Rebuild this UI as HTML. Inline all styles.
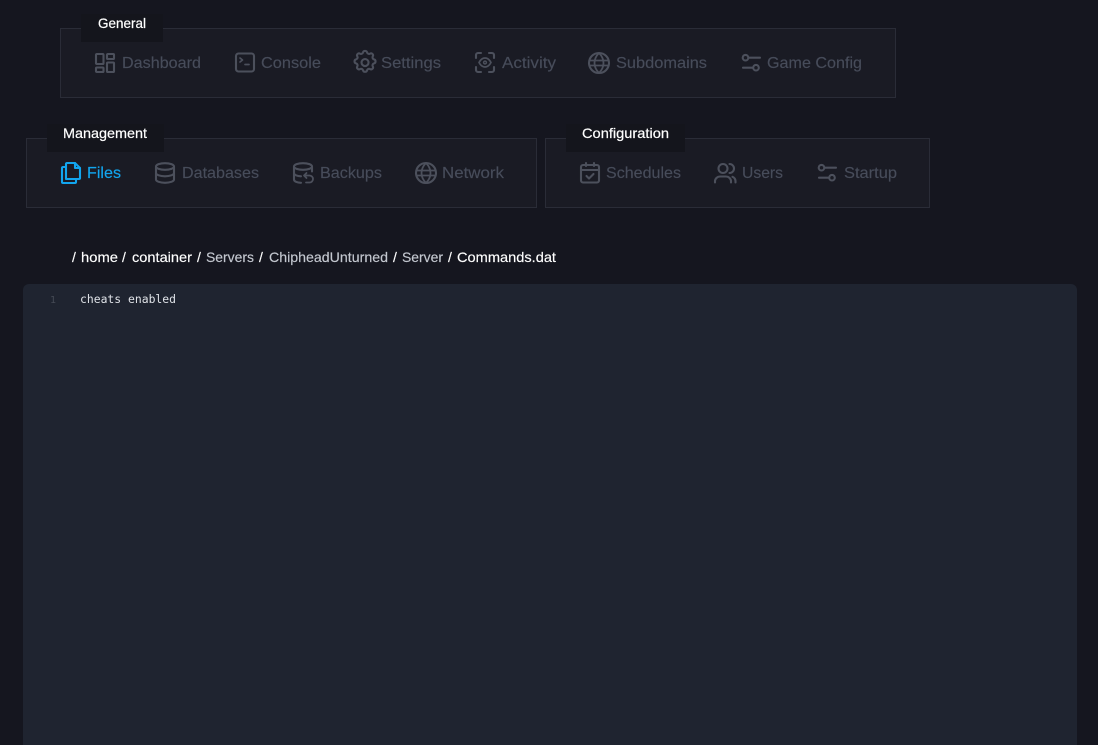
<!DOCTYPE html>
<html>
<head>
<meta charset="utf-8">
<style>
html,body{margin:0;padding:0;width:1098px;height:745px;overflow:hidden;background:#15161f}
svg{position:absolute;left:0;top:0;display:block}
.t{font-family:"Liberation Sans",sans-serif;font-size:16px;fill:#474c5a;stroke:#474c5a;stroke-width:.15}
.l{font-family:"Liberation Sans",sans-serif;font-size:14px;fill:#fff;stroke:#fff;stroke-width:.2}
.b{font-family:"Liberation Sans",sans-serif;font-size:14px;stroke-width:.15}
.i{fill:none;stroke:#4c505c;stroke-width:2.1;stroke-linecap:round;stroke-linejoin:round}
</style>
</head>
<body>
<svg width="1098" height="745" viewBox="0 0 1098 745" xmlns="http://www.w3.org/2000/svg">
  <rect x="60.5" y="28.5" width="835" height="69" fill="#1a1b24" stroke="#2a2c37"/>
  <rect x="26.5" y="138.5" width="510" height="69" fill="#1a1b24" stroke="#2a2c37"/>
  <rect x="545.5" y="138.5" width="384" height="69" fill="#1a1b24" stroke="#2a2c37"/>
  <rect x="81" y="14" width="82" height="28" fill="#14151c"/>
  <rect x="47" y="124" width="117" height="28" fill="#14151c"/>
  <rect x="566" y="124" width="119" height="28" fill="#14151c"/>

  <text class="l" x="98" y="28" textLength="48" lengthAdjust="spacingAndGlyphs">General</text>
  <text class="l" x="63" y="138" textLength="84" lengthAdjust="spacingAndGlyphs">Management</text>
  <text class="l" x="582" y="138" textLength="87" lengthAdjust="spacingAndGlyphs">Configuration</text>

  <text class="t" x="122" y="68" textLength="79" lengthAdjust="spacingAndGlyphs">Dashboard</text>
  <text class="t" x="261" y="68" textLength="60" lengthAdjust="spacingAndGlyphs">Console</text>
  <text class="t" x="381" y="68" textLength="60" lengthAdjust="spacingAndGlyphs">Settings</text>
  <text class="t" x="502" y="68" textLength="54" lengthAdjust="spacingAndGlyphs">Activity</text>
  <text class="t" x="616" y="68" textLength="91" lengthAdjust="spacingAndGlyphs">Subdomains</text>
  <text class="t" x="767" y="68" textLength="95" lengthAdjust="spacingAndGlyphs">Game Config</text>

  <text class="t" style="fill:#12a5ee;stroke:#12a5ee" x="87" y="178" textLength="34" lengthAdjust="spacingAndGlyphs">Files</text>
  <text class="t" x="182" y="178" textLength="77" lengthAdjust="spacingAndGlyphs">Databases</text>
  <text class="t" x="320" y="178" textLength="62" lengthAdjust="spacingAndGlyphs">Backups</text>
  <text class="t" x="442" y="178" textLength="62" lengthAdjust="spacingAndGlyphs">Network</text>
  <text class="t" x="606" y="178" textLength="75" lengthAdjust="spacingAndGlyphs">Schedules</text>
  <text class="t" x="742" y="178" textLength="41" lengthAdjust="spacingAndGlyphs">Users</text>
  <text class="t" x="844" y="178" textLength="53" lengthAdjust="spacingAndGlyphs">Startup</text>

  <!-- Dashboard -->
  <g class="i" stroke-linejoin="miter" transform="translate(95,52)">
    <rect x="1" y="2" width="7.500" height="10" rx=".8"/><rect x="12" y="2" width="7" height="5" rx=".8"/>
    <rect x="1" y="15.500" width="7.500" height="4.500" rx=".8"/><rect x="12" y="10.500" width="7" height="9.500" rx=".8"/>
  </g>
  <!-- Console -->
  <g class="i" transform="translate(235,52)">
    <rect x="1" y="1.500" width="18" height="18" rx="2.500"/>
    <path d="M5 6l2.500 2L5 10M10 12.500h4" stroke-width="1.700"/>
  </g>
  <!-- Settings -->
  <g class="i" style="stroke-width:1.800" transform="translate(351,48.500) scale(1.170)">
    <path d="M10.300 3.300c.4-1.700 3-1.700 3.400 0 .3 1.100 1.500 1.600 2.600 1.100 1.500-.9 3.200.8 2.300 2.300-.6 1 0 2.300 1.100 2.600 1.700.4 1.700 3 0 3.400-1.100.3-1.700 1.500-1.100 2.600.9 1.500-.8 3.200-2.300 2.300-1.100-.6-2.300 0-2.600 1.100-.4 1.700-3 1.700-3.400 0-.3-1.100-1.500-1.700-2.600-1.100-1.500.9-3.200-.8-2.300-2.300.6-1.100 0-2.300-1.100-2.600-1.700-.4-1.700-3 0-3.400 1.100-.3 1.700-1.500 1.100-2.600-.9-1.500.8-3.200 2.300-2.300 1.100.5 2.300 0 2.600-1.100z"/>
    <circle cx="12" cy="12" r="3"/>
  </g>
  <!-- Activity -->
  <g class="i" transform="translate(475,52)">
    <path d="M1 6V3a2 2 0 0 1 2-2h3M14 1h3a2 2 0 0 1 2 2v3M19 15v3a2 2 0 0 1-2 2h-3M6 20H3a2 2 0 0 1-2-2v-3"/>
    <path d="M4 10.500c1.600-3 3.600-4.500 6-4.500s4.400 1.500 6 4.500c-1.600 3-3.600 4.500-6 4.500s-4.400-1.500-6-4.500z" stroke-width="1.700"/>
    <circle cx="10" cy="10.500" r="1.400" stroke-width="1.500"/>
  </g>
  <!-- Subdomains globe -->
  <g class="i" transform="translate(588,52)">
    <circle cx="11" cy="11" r="10"/><path d="M1.500 8.500h19M1.500 13.500h19" stroke-width="1.800"/>
    <path d="M11 1c-6 6-6 14 0 20M11 1c6 6 6 14 0 20" stroke-width="1.800"/>
  </g>
  <!-- Game Config -->
  <g class="i" transform="translate(741,53)">
    <circle cx="4.500" cy="4.700" r="2.800"/><circle cx="15" cy="14.700" r="2.800"/><path d="M8 4.700h11M2 14.700h9.500"/>
  </g>
  <!-- Files -->
  <g class="i" style="stroke:#12a5ee" transform="translate(61,162)">
    <path d="M5 4V2a1 1 0 0 1 1-1h8l5 5v10a1 1 0 0 1-1 1H5z"/>
    <path d="M14 1v5h5"/>
    <path d="M5 5H2a1 1 0 0 0-1 1v14a1 1 0 0 0 1 1h12a1 1 0 0 0 1-1V17"/>
  </g>
  <!-- Databases -->
  <g class="i" transform="translate(155,162)">
    <ellipse cx="10" cy="4.500" rx="9" ry="3.300"/>
    <path d="M1 4.500v13c0 1.800 4 3.300 9 3.300s9-1.500 9-3.300v-13M1 11c0 1.800 4 3.300 9 3.300s9-1.500 9-3.300"/>
  </g>
  <!-- Backups -->
  <g class="i" transform="translate(293,162)">
    <ellipse cx="10" cy="4.500" rx="9" ry="3.300"/>
    <path d="M1 4.500v13c0 1.800 3 3.300 7 3.300M19 4.500v5M1 11c0 1.800 3 3.300 7 3.300"/>
    <path d="M11 13.500h5.500a3.500 3.500 0 0 1 0 7H13M13.500 11l-2.500 2.500 2.500 2.500" stroke-width="1.800"/>
  </g>
  <!-- Network globe -->
  <g class="i" transform="translate(415,162)">
    <circle cx="11" cy="11" r="10"/><path d="M1.500 8.500h19M1.500 13.500h19" stroke-width="1.800"/>
    <path d="M11 1c-6 6-6 14 0 20M11 1c6 6 6 14 0 20" stroke-width="1.800"/>
  </g>
  <!-- Schedules -->
  <g class="i" transform="translate(580,162)">
    <rect x="1" y="3" width="18" height="17.500" rx="2"/>
    <path d="M1 8h18M6 1v3M14 1v3M6.500 14l2.500 2.500 4.500-4.500"/>
  </g>
  <!-- Users -->
  <g class="i" transform="translate(714,162)">
    <circle cx="9" cy="6.500" r="4.500"/>
    <path d="M1 20.500v-1.500a5 5 0 0 1 5-4.500h6a5 5 0 0 1 5 4.500v1.500M15.500 2a4.500 4.500 0 0 1 0 9M18.500 14.800a5 5 0 0 1 3 4.200v1.500"/>
  </g>
  <!-- Startup -->
  <g class="i" transform="translate(817,163)">
    <circle cx="4.500" cy="4.700" r="2.800"/><circle cx="15" cy="14.700" r="2.800"/><path d="M8 4.700h11M2 14.700h9.500"/>
  </g>

  <!-- Breadcrumb -->
  <g class="b" fill="#fff" stroke="#fff">
    <text x="72" y="262">/</text>
    <text x="81" y="262" textLength="37" lengthAdjust="spacingAndGlyphs">home</text>
    <text x="122" y="262">/</text>
    <text x="132" y="262" textLength="60" lengthAdjust="spacingAndGlyphs">container</text>
    <text x="197" y="262">/</text>
    <text x="206" y="262" fill="#c3c7cf" stroke="#c3c7cf" textLength="48" lengthAdjust="spacingAndGlyphs">Servers</text>
    <text x="259" y="262">/</text>
    <text x="269" y="262" fill="#c3c7cf" stroke="#c3c7cf" textLength="119" lengthAdjust="spacingAndGlyphs">ChipheadUnturned</text>
    <text x="393" y="262">/</text>
    <text x="402" y="262" fill="#c3c7cf" stroke="#c3c7cf" textLength="41" lengthAdjust="spacingAndGlyphs">Server</text>
    <text x="448" y="262">/</text>
    <text x="457" y="262" textLength="99" lengthAdjust="spacingAndGlyphs">Commands.dat</text>
  </g>

  <!-- Editor -->
  <path d="M29 284H1071a6 6 0 0 1 6 6V745H23V290a6 6 0 0 1 6-6z" fill="#1f2430"/>
  <text x="50" y="303" font-family="'DejaVu Sans Mono',monospace" font-size="10" fill="#454a55">1</text>
  <text x="80" y="303" font-family="'DejaVu Sans Mono',monospace" font-size="11.400" fill="#dfe2e7">cheats enabled</text>
</svg>
</body>
</html>
